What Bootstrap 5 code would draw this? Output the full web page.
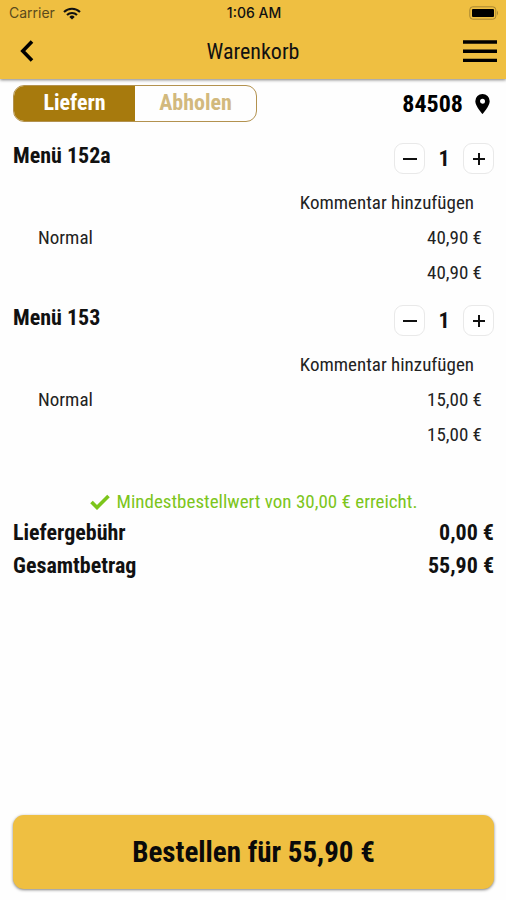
<!DOCTYPE html>
<html lang="de">
<head>
<meta charset="utf-8">
<meta name="viewport" content="width=device-width, initial-scale=1">
<title>Warenkorb</title>
<link href="https://cdn.jsdelivr.net/npm/bootstrap@5.3.0/dist/css/bootstrap.min.css" rel="stylesheet">
<style>
body { font-family: "Roboto Condensed", Roboto, sans-serif; font-size: 19px; line-height: 24px; color: #111; background: #fefefe; }
.app-head { background: #efbf41; color: #111; box-shadow: 0 1px 3px rgba(0,0,0,.5); padding-bottom: 3px; }
.status { font-family: Inter, sans-serif; font-size: 14px; line-height: 26px; padding: 0 7px 0 9px; }
.status .carrier { color: #5b4a1c; }
.status .clock { font-weight: 500; }
.bar { height: 50px; padding: 0 9px; }
.bar-title { font-size: 22px; line-height: 26px; padding-top: 2px; }
.bare { border: 0; background: none; padding: 0; color: #000; line-height: 1; }
.back { padding-left: 9px; }
.side { padding: 6px 12px 7px 13px; }
.mode { width: 244px; height: 37px; border: 1px solid #b3924f; border-radius: 11px; overflow: hidden; }
.mode label { font-size: 22px; line-height: 26px; padding-bottom: 2px; font-weight: 700; color: #d2b97d; cursor: pointer; }
.mode .btn-check:checked + label { background: #a77a0d; color: #fff; }
.zip { font-size: 24px; font-weight: 700; gap: 12px; padding-right: 4px; }
.items { padding-top: 21px; }
.item { height: 162px; }
.item-name, .sums { font-size: 22px; font-weight: 700; line-height: 26px; }
.step { width: 31px; height: 31px; border: 1px solid #e9e9e9; border-radius: 9px; background: #fff; padding: 0; color: #111; }
.qty { width: 38px; font-size: 22px; font-weight: 700; }
.comment { color: #222; line-height: 24px; padding-right: 20px; margin-top: 17px; }
.line { padding: 0 12px 0 25px; margin-top: 11px; color: #222; }
.ok { color: #7cc51b; gap: 7px; padding-top: 23px; }
.sums dt, .sums dd { font-weight: 700; margin: 0; line-height: 33px; }
.sums { padding-top: 2px; }
.order { background: #efbf41; border: 0; border-radius: 11px; height: 74px; font-size: 29px; font-weight: 700; color: #0a0a0a; box-shadow: 0 1px 3px rgba(0,0,0,.5); }
</style>
<script src="https://cdn.jsdelivr.net/npm/bootstrap@5.3.0/dist/js/bootstrap.bundle.min.js" defer></script>
</head>
<body class="d-flex flex-column min-vh-100">
<header class="app-head">
  <div class="status d-flex align-items-center">
    <div class="col d-flex align-items-center">
      <span class="carrier">Carrier</span>
      <svg class="ms-2" width="18" height="13" viewBox="0 0 18 13" fill="none" stroke="#111" stroke-width="2.1" aria-hidden="true"><path d="M1 5a11.3 11.3 0 0 1 16 0M4 8a7.100 7.100 0 0 1 10 0"/><path d="M9 12.500 6.300 9.900a3.900 3.900 0 0 1 5.400 0z" fill="#111" stroke="none"/></svg>
    </div>
    <span class="clock">1:06 AM</span>
    <div class="col d-flex justify-content-end">
      <svg width="30" height="14" viewBox="0 0 30 14" aria-hidden="true"><rect x=".8" y=".8" width="26" height="12.400" rx="3" fill="none" stroke="#a78632"/><rect x="3" y="3" width="22" height="8" rx="1" fill="#000"/><path d="M28 4.500q2 2.500 0 5z" fill="#a78632"/></svg>
    </div>
  </div>
  <nav class="bar d-flex align-items-center" aria-label="Kopfzeile">
    <div class="col d-flex">
      <button class="bare back" type="button" aria-label="Zurück"><svg width="18" height="24" viewBox="0 0 18 24" fill="none" stroke="#000" stroke-width="3.600"><path d="M14 2.500 4.800 12 14 21.500"/></svg></button>
    </div>
    <h1 class="bar-title fw-normal m-0">Warenkorb</h1>
    <div class="col d-flex justify-content-end">
      <button class="bare" type="button" aria-label="Menü"><svg width="34" height="24" viewBox="0 0 34 24" stroke="#000" stroke-width="3.400"><path d="M0 3h34M0 12.200h34M0 21.400h34"/></svg></button>
    </div>
  </nav>
</header>

<main class="side flex-grow-1 d-flex flex-column">
  <div class="d-flex justify-content-between align-items-center">
    <div class="mode d-flex" role="group" aria-label="Bestellart">
      <input class="btn-check" type="radio" name="mode" id="liefern" checked>
      <label class="col d-flex align-items-center justify-content-center" for="liefern">Liefern</label>
      <input class="btn-check" type="radio" name="mode" id="abholen">
      <label class="col d-flex align-items-center justify-content-center" for="abholen">Abholen</label>
    </div>
    <button class="bare zip d-flex align-items-center" type="button">84508
      <svg width="15" height="20" viewBox="0 0 15 20" aria-hidden="true"><path fill="#000" fill-rule="evenodd" d="M7.500 0A7.200 7.200 0 0 0 .3 7.200C.3 12 7.500 20 7.500 20s7.200-8 7.200-12.800A7.200 7.200 0 0 0 7.500 0zm0 4.700a2.500 2.500 0 1 1 0 5 2.500 2.500 0 0 1 0-5z"/></svg>
    </button>
  </div>

  <section class="items">
    <article class="item">
      <div class="d-flex justify-content-between">
        <h2 class="item-name m-0">Menü 152a</h2>
        <div class="d-flex align-items-center">
          <button class="step d-flex align-items-center justify-content-center" type="button" aria-label="Weniger"><svg width="14" height="14" stroke="#111" stroke-width="2"><path d="M0 7h14"/></svg></button>
          <span class="qty text-center">1</span>
          <button class="step d-flex align-items-center justify-content-center" type="button" aria-label="Mehr"><svg width="14" height="14" stroke="#111" stroke-width="2"><path d="M1 7h12M7 1v12"/></svg></button>
        </div>
      </div>
      <div class="d-flex justify-content-end"><button class="bare comment" type="button">Kommentar hinzufügen</button></div>
      <div class="line d-flex justify-content-between"><span>Normal</span><span>40,90 €</span></div>
      <div class="line d-flex justify-content-end"><span>40,90 €</span></div>
    </article>
    <article class="item">
      <div class="d-flex justify-content-between">
        <h2 class="item-name m-0">Menü 153</h2>
        <div class="d-flex align-items-center">
          <button class="step d-flex align-items-center justify-content-center" type="button" aria-label="Weniger"><svg width="14" height="14" stroke="#111" stroke-width="2"><path d="M0 7h14"/></svg></button>
          <span class="qty text-center">1</span>
          <button class="step d-flex align-items-center justify-content-center" type="button" aria-label="Mehr"><svg width="14" height="14" stroke="#111" stroke-width="2"><path d="M1 7h12M7 1v12"/></svg></button>
        </div>
      </div>
      <div class="d-flex justify-content-end"><button class="bare comment" type="button">Kommentar hinzufügen</button></div>
      <div class="line d-flex justify-content-between"><span>Normal</span><span>15,00 €</span></div>
      <div class="line d-flex justify-content-end"><span>15,00 €</span></div>
    </article>
  </section>

  <p class="ok d-flex align-items-center justify-content-center mb-0">
    <svg width="20" height="16" viewBox="0 0 20 16" fill="none" stroke="#7cc51b" stroke-width="3.600" aria-hidden="true"><path d="m1.500 8 5.500 5.500L18.500 2"/></svg>
    Mindestbestellwert von 30,00 € erreicht.
  </p>
  <dl class="sums m-0">
    <div class="d-flex justify-content-between"><dt>Liefergebühr</dt><dd>0,00 €</dd></div>
    <div class="d-flex justify-content-between"><dt>Gesamtbetrag</dt><dd>55,90 €</dd></div>
  </dl>
  <div class="mt-auto">
    <button class="order w-100 mb-1" type="button">Bestellen für 55,90 €</button>
  </div>
</main>
</body>
</html>
